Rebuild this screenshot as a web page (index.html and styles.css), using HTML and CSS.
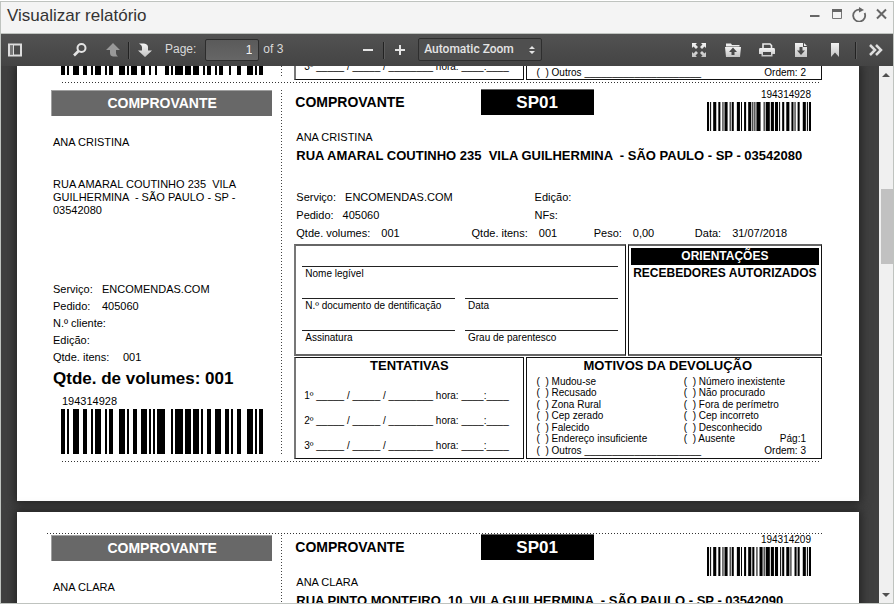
FILE: index.html
```html
<!DOCTYPE html>
<html lang="pt-BR">
<head>
<meta charset="utf-8">
<title>Visualizar relatório</title>
<link rel="stylesheet" href="styles.css">
</head>
<body>
<svg class="defs" aria-hidden="true">
  <defs>
    <linearGradient id="metal" x1="0" y1="0" x2="0" y2="1"><stop offset="0" stop-color="#f4f4f4"/><stop offset="1" stop-color="#c4c4c4"/></linearGradient>
  </defs>
  <!-- Code 128 symbols: bar and space widths as a dash pattern, one unit per module -->
  <symbol id="code-928" viewBox="0 0 101 10" preserveAspectRatio="none"><path d="M0 5H101" stroke="#000" stroke-width="10" stroke-dasharray="2 1 1 2 3 2 2 2 1 1 3 2 1 1 2 3 3 1 1 2 2 2 3 1 1 1 1 1 4 3 1 1 4 1 3 1 3 1 1 2 2 2 3 2 2 1 1 2 2 3 3 1 1 1 2"/></symbol>
  <symbol id="code-209" viewBox="0 0 101 10" preserveAspectRatio="none"><path d="M0 5H101" stroke="#000" stroke-width="10" stroke-dasharray="2 1 1 2 3 2 2 2 1 1 3 2 1 1 2 3 3 1 1 2 2 2 3 1 2 2 1 2 3 1 1 1 4 1 3 1 3 2 1 1 2 2 3 1 1 3 2 1 2 3 3 1 1 1 2"/></symbol>
  <symbol id="code-669" viewBox="0 0 101 10" preserveAspectRatio="none"><path d="M0 5H101" stroke="#000" stroke-width="10" stroke-dasharray="2 1 1 2 3 2 2 2 1 1 3 2 1 1 2 3 3 1 1 1 3 2 2 2 1 2 1 4 2 1 1 1 4 1 3 1 3 2 1 1 2 2 1 1 2 3 1 3 2 3 3 1 1 1 2"/></symbol>
</svg>
<div class="window">
  <header class="titlebar">
    <h1>Visualizar relatório</h1>
    <div class="window-buttons">
      <button type="button" aria-label="Minimizar"><svg width="16" height="16" viewBox="0 0 16 16"><path d="M3 10H12.500" stroke="#666" stroke-width="2"/></svg></button>
      <button type="button" aria-label="Maximizar"><svg width="16" height="16" viewBox="0 0 16 16"><path d="M3.500 3.500H12.500V12.500H3.500Z" fill="none" stroke="#777"/><path d="M3 4.500H13" stroke="#666" stroke-width="3"/></svg></button>
      <button type="button" aria-label="Recarregar"><svg width="16" height="16" viewBox="0 0 16 16"><path d="M9 3.600A6 6 0 1 0 13.600 7" fill="none" stroke="#666" stroke-width="1.800"/><path d="M8 1V6.500L13 4Z" fill="#666"/></svg></button>
      <button type="button" aria-label="Fechar"><svg width="16" height="16" viewBox="0 0 16 16"><path d="M4 3.500L13 12.500M13 3.500L4 12.500" stroke="#666" stroke-width="2"/></svg></button>
    </div>
  </header>

  <div class="toolbar">
    <div class="tools tools-left">
      <button type="button" aria-label="Toggle Sidebar" class="sidebar-toggle"><svg width="16" height="16" viewBox="0 0 16 16"><path d="M2 2.500H14V13.500H2Z" fill="none" stroke="#ddd" stroke-width="2"/><path d="M3 3.500H6V12.500H3Z" fill="#777"/><path d="M6.500 3V13" stroke="#ddd"/></svg></button>
      <button type="button" aria-label="Find" class="find"><svg width="16" height="16" viewBox="0 0 16 16"><circle cx="9.500" cy="6" r="4" fill="none" stroke="#e4e4e4" stroke-width="2"/><path d="M6.500 9L2 13.500" stroke="#e4e4e4" stroke-width="2.600"/></svg></button>
      <button type="button" aria-label="Previous Page"><svg width="16" height="16" viewBox="0 0 16 16"><path d="M8 1L15 8H11V11Q11 13 13 14.500H8Q5 14 5 11V8H1Z" fill="#999"/></svg></button>
      <span class="separator"></span>
      <button type="button" aria-label="Next Page"><svg width="16" height="16" viewBox="0 0 16 16"><path d="M8 15L1 8.500H5V5Q5 3 2 1.500H7Q11 2 11 5V8.500H15Z" fill="url(#metal)"/></svg></button>
      <label for="page-number">Page:</label>
      <input id="page-number" type="text" value="1">
      <span class="page-count">of 3</span>
    </div>
    <div class="tools tools-middle">
      <button type="button" aria-label="Zoom Out"><svg width="16" height="16" viewBox="0 0 16 16"><path d="M3 8H13" stroke="#e4e4e4" stroke-width="2"/></svg></button>
      <span class="separator"></span>
      <button type="button" aria-label="Zoom In"><svg width="16" height="16" viewBox="0 0 16 16"><path d="M3 8H13M8 3V13" stroke="#e4e4e4" stroke-width="2"/></svg></button>
      <div class="zoom">
        <select aria-label="Zoom"><option>Automatic Zoom</option></select>
        <svg width="6" height="10" viewBox="0 0 6 10"><path d="M0 4L3 1L6 4ZM0 6L3 9L6 6Z" fill="#e4e4e4"/></svg>
      </div>
    </div>
    <div class="tools tools-right">
      <button type="button" aria-label="Presentation Mode"><svg width="16" height="16" viewBox="0 0 16 16"><path d="M1 1H6L4.500 2.500L7 5L5 7L2.500 4.500L1 6ZM15 1V6L13.500 4.500L11 7L9 5L11.500 2.500L10 1ZM1 15V10L2.500 11.500L5 9L7 11L4.500 13.500L6 15ZM15 15H10L11.500 13.500L9 11L11 9L13.500 11.500L15 10Z" fill="url(#metal)"/></svg></button>
      <button type="button" aria-label="Open File"><svg width="16" height="16" viewBox="0 0 16 16"><path d="M1 1.500H6L7 3H14.500V4.500H1Z" fill="#eee"/><path fill-rule="evenodd" d="M0 5H16L15 15H1ZM8 5.500L4 10H6.500V13H9.500V10H12Z" fill="url(#metal)"/></svg></button>
      <button type="button" aria-label="Print"><svg width="16" height="16" viewBox="0 0 16 16"><path d="M4 6.500V2H11L12.500 3.500V6.500" fill="none" stroke="#ececec" stroke-width="1.600"/><path fill-rule="evenodd" d="M1 6H15Q16 6 16 8V12H13.500V14.500H2.500V12H0V8Q0 6 1 6ZM4 10V13H12V10Z" fill="url(#metal)"/></svg></button>
      <button type="button" aria-label="Download"><svg width="16" height="16" viewBox="0 0 16 16"><path fill-rule="evenodd" d="M2 1H10V5H14V15H2ZM6.500 5V8.500H4L8 13L12 8.500H9.500V5Z" fill="url(#metal)"/><path d="M11 1L14 4H11Z" fill="#eee"/></svg></button>
      <button type="button" aria-label="Bookmark"><svg width="16" height="16" viewBox="0 0 16 16"><path d="M4 1H12V15L8 10.500L4 15Z" fill="url(#metal)"/></svg></button>
      <span class="separator"></span>
      <button type="button" aria-label="Tools" class="more"><svg width="16" height="16" viewBox="0 0 16 16"><path d="M2 3L7 8L2 13M8 3L13 8L8 13" fill="none" stroke="#dedede" stroke-width="2.500"/></svg></button>
    </div>
  </div>

  <div class="viewer">
    <main class="pages">
      <section class="page page-first">
        <div class="tail">
          <div class="receipt">
            <div class="stub"><svg class="barcode-large"><use href="#code-669"/></svg></div>
            <div class="main">
              <div class="boxes lower">
                <div class="box"><p class="attempt">3º _____ / _____ / ________ hora: ____:____</p></div>
                <div class="box">
                  <div class="reasons"><span>( &nbsp;) Outros _____________________</span><span class="end">Ordem: 2</span></div>
                </div>
              </div>
            </div>
          </div>
        </div>
        <div class="cut"></div>
        <article class="receipt">
          <div class="stub">
            <h2 class="stub-title">COMPROVANTE</h2>
            <p class="stub-name">ANA CRISTINA</p>
            <p class="stub-address">RUA AMARAL COUTINHO 235 &nbsp;VILA GUILHERMINA &nbsp;- SÃO PAULO - SP - 03542080</p>
            <dl class="stub-info">
              <div><dt>Serviço:</dt><dd>ENCOMENDAS.COM</dd></div>
              <div><dt>Pedido:</dt><dd>405060</dd></div>
              <div><dt>N.º cliente:</dt><dd></dd></div>
              <div><dt>Edição:</dt><dd></dd></div>
              <div class="wide"><dt>Qtde. itens:</dt><dd>001</dd></div>
            </dl>
            <p class="total">Qtde. de volumes: 001</p>
            <p class="stub-number">194314928</p>
            <svg class="barcode-large" role="img" aria-label="194314928"><use href="#code-928"/></svg>
          </div>
          <div class="main">
            <div class="head">
              <h2>COMPROVANTE</h2>
              <strong class="route">SP01</strong>
              <div class="code"><span>194314928</span><svg class="barcode-small" role="img" aria-label="194314928"><use href="#code-928"/></svg></div>
            </div>
            <p class="name">ANA CRISTINA</p>
            <p class="address">RUA AMARAL COUTINHO 235 &nbsp;VILA GUILHERMINA &nbsp;- SÃO PAULO - SP - 03542080</p>
            <dl class="info">
              <div class="two"><div class="pair"><dt>Serviço:</dt><dd>ENCOMENDAS.COM</dd></div><div class="pair"><dt>Edição:</dt><dd></dd></div></div>
              <div class="two"><div class="pair"><dt>Pedido:</dt><dd>405060</dd></div><div class="pair"><dt>NFs:</dt><dd></dd></div></div>
              <div class="four"><div class="pair"><dt>Qtde. volumes:</dt><dd>001</dd></div><div class="pair"><dt>Qtde. itens:</dt><dd>001</dd></div><div class="pair"><dt>Peso:</dt><dd>0,00</dd></div><div class="pair"><dt>Data:</dt><dd>31/07/2018</dd></div></div>
            </dl>
            <div class="boxes upper">
              <div class="box signature">
                <span class="full">Nome legível</span>
                <span>N.º documento de dentificação</span><span>Data</span>
                <span>Assinatura</span><span>Grau de parentesco</span>
              </div>
              <div class="box guidance"><h3>ORIENTAÇÕES</h3><p>RECEBEDORES AUTORIZADOS</p></div>
            </div>
            <div class="boxes lower">
              <div class="box"><h3>TENTATIVAS</h3>
                <p class="attempt">1º _____ / _____ / ________ hora: ____:____</p>
                <p class="attempt">2º _____ / _____ / ________ hora: ____:____</p>
                <p class="attempt">3º _____ / _____ / ________ hora: ____:____</p>
              </div>
              <div class="box returns"><h3>MOTIVOS DA DEVOLUÇÃO</h3>
                <div class="reasons">
                  <span>( &nbsp;) Mudou-se</span><span>( &nbsp;) Número inexistente</span>
                  <span>( &nbsp;) Recusado</span><span>( &nbsp;) Não procurado</span>
                  <span>( &nbsp;) Zona Rural</span><span>( &nbsp;) Fora de perímetro</span>
                  <span>( &nbsp;) Cep zerado</span><span>( &nbsp;) Cep incorreto</span>
                  <span>( &nbsp;) Falecido</span><span>( &nbsp;) Desconhecido</span>
                  <span>( &nbsp;) Endereço insuficiente</span><span class="split"><span>( &nbsp;) Ausente</span><span>Pág:1</span></span>
                  <span>( &nbsp;) Outros _____________________</span><span class="end">Ordem: 3</span>
                </div>
              </div>
            </div>
          </div>
        </article>
        <div class="cut"></div>
      </section>

      <section class="page page-next">
        <div class="cut cut-top"></div>
        <article class="receipt">
          <div class="stub">
            <h2 class="stub-title">COMPROVANTE</h2>
            <p class="stub-name">ANA CLARA</p>
          </div>
          <div class="main">
            <div class="head">
              <h2>COMPROVANTE</h2>
              <strong class="route">SP01</strong>
              <div class="code"><span>194314209</span><svg class="barcode-small" role="img" aria-label="194314209"><use href="#code-209"/></svg></div>
            </div>
            <p class="name">ANA CLARA</p>
            <p class="address">RUA PINTO MONTEIRO, 10 &nbsp;VILA GUILHERMINA &nbsp;- SÃO PAULO - SP - 03542090</p>
          </div>
        </article>
      </section>
    </main>
    <div class="scrollbar" aria-hidden="true">
      <span class="arrow up"></span><span class="thumb"></span><span class="arrow down"></span>
    </div>
  </div>
</div>
</body>
</html>
```
FILE: styles.css
```css
* { box-sizing: border-box; }

body {
  margin: 0;
  background: #fff;
  color: #000;
  font-family: "Liberation Sans", Arial, sans-serif;
  font-size: 11px;
}

h1, h2, h3, p, dl, dd { margin: 0; }
button { padding: 0; border: 0; background: none; }
svg { display: block; }
.defs { position: absolute; width: 0; height: 0; }

.window {
  display: flex;
  flex-direction: column;
  height: calc(100vh - 2px);
  margin: 1px 1px 1px 0;
  border: 1px solid #bfc3bf;
  overflow: hidden;
}

.titlebar {
  display: flex;
  justify-content: space-between;
  height: 32px;
  flex: none;
  padding: 0 4px 0 6px;
  border-bottom: 1px solid #bfc3bf;
  background: #f4f4f4;
}
.titlebar h1 { font-size: 17px; font-weight: 400; line-height: 28px; color: #333; }
.window-buttons { display: flex; gap: 6px; padding-top: 4px; height: 20px; }

.toolbar {
  display: flex;
  justify-content: space-between;
  flex: none;
  height: 32px;
  padding: 0 9px 0 6px;
  background: linear-gradient(#525252, #444);
  color: #d9d9d9;
  font-size: 12px;
}
.tools { display: flex; align-items: center; }
.tools-left label { margin: 0 9px 2px 12px; }
.tools-left .find { margin: 0 17px 0 49px; }
.tools-left .separator { margin: 0 7px; }
.page-count { margin: 0 0 2px 4px; }
.separator { width: 2px; height: 17px; border-left: 1px solid #222; border-right: 1px solid #5c5c5c; }
#page-number {
  width: 54px;
  height: 22px;
  margin-bottom: 1px;
  padding: 0 6px;
  border: 1px solid #2c2c2c;
  border-radius: 2px;
  background: linear-gradient(#5a5a5a, #666);
  color: #f2f2f2;
  font: 12px "Liberation Sans", Arial, sans-serif;
  text-align: right;
}
.tools-middle { margin-right: 72px; }
.tools-middle .separator { margin: 0 7px; }
.zoom { position: relative; margin: 0 0 2px 10px; }
.zoom select {
  width: 124px;
  height: 23px;
  padding: 0 5px;
  border: 1px solid #2e2e2e;
  border-radius: 2px;
  appearance: none;
  background: #4f4f4f;
  color: #e4e4e4;
  font: 500 12px Roboto, "Liberation Sans", sans-serif;
}
.zoom svg { position: absolute; right: 7px; top: 7px; }
.tools-right { gap: 18px; }
.tools-right .separator { margin-right: -7px; margin-left: -6px; }

.viewer { display: flex; flex: 1; min-height: 0; background: #404040; }
.pages {
  display: flex;
  flex: 1;
  flex-direction: column;
  gap: 11px;
  min-width: 0;
  padding: 0 20px 0 16px;
  overflow: hidden;
}
.page { flex: none; padding-left: 34px; padding-right: 37px; background: #fff; box-shadow: 0 0 9px 2px #222; }
.page-first { padding-bottom: 39px; }
.page-next { padding-top: 21px; }

.cut {
  height: 1px;
  margin: 0 2px 0 11px;
  background: repeating-linear-gradient(90deg, #333 0 1px, #fff 1px 3px);
}
.cut-top { margin: 0 0 0 -4px; }

.receipt {
  display: grid;
  grid-template-columns: minmax(0, 3fr) minmax(0, 7fr);
  margin-top: 6px;
}
.page-next .receipt { margin-top: 0; }

.stub {
  position: relative;
  display: flex;
  flex-direction: column;
  margin: 1px 0 6px;
  padding-right: 10px;
}
.stub::after {
  position: absolute;
  top: 0;
  right: 0;
  bottom: 0;
  width: 1px;
  background: repeating-linear-gradient(#444 0 1px, #fff 1px 3px);
  content: "";
}
.stub p, .stub-info { margin-left: 2px; }
.stub-title {
  border-top: 1px solid #a0a0a0;
  border-left: 1px solid #a0a0a0;
  background: #686868;
  color: #fff;
  font-size: 14px;
  line-height: 25px;
  text-align: center;
}
.stub .stub-name { margin-top: 19px; line-height: 14px; }
.stub .stub-address { margin-top: 29px; line-height: 13px; }
.stub-info { margin-top: 64px; line-height: 17px; }
.stub-info div { display: grid; grid-template-columns: 49px 1fr; height: 17px; white-space: nowrap; }
.stub-info .wide { grid-template-columns: 70px 1fr; }
.stub .total { margin-top: 2px; font-size: 17px; font-weight: 700; line-height: 21px; }
.stub .stub-number { margin: 5px 0 1px 11px; line-height: 14px; }
.barcode-large { width: 202px; height: 45px; margin-left: 10px; margin-bottom: 1px; }

.main { margin-bottom: 2px; padding-left: 12px; }
.head { display: grid; grid-template-columns: 186fr 113fr 228fr; height: 41px; }
.head h2 { padding-left: 1px; font-size: 14px; line-height: 26px; }
.route {
  height: 26px;
  border-top: 1px solid #666;
  background: #000;
  color: #fff;
  font-size: 17px;
  line-height: 25px;
  text-align: center;
}
.code { justify-self: end; margin-right: 11px; font-size: 10px; line-height: 12px; text-align: right; }
.barcode-small { width: 104px; height: 29px; margin-top: 1px; }
.name { padding-left: 2px; line-height: 14px; }
.address { padding-left: 2px; font-size: 13px; font-weight: 700; line-height: 23px; white-space: nowrap; }

.info { margin: 21px 0 2px; padding-left: 2px; line-height: 18px; }
.two { display: grid; grid-template-columns: 238fr 287fr; }
.four { display: grid; grid-template-columns: 175fr 122fr 101fr 127fr; }
.pair { display: flex; gap: 9px; white-space: nowrap; }
.four .pair { gap: 11px; }

.boxes { display: grid; gap: 2px; }
.upper { grid-template-columns: 331fr 194fr; margin-bottom: 1px; }
.lower { grid-template-columns: 229fr 296fr; }
.box { border: 1px solid #111; }
.box:first-child { border-left: 2px solid #777; }
.upper .box { min-height: 112px; border-top: 2px solid #666; border-bottom: 2px solid #666; }
.lower .box { min-height: 102px; }
.box h3 { font-size: 13px; line-height: 15px; text-align: center; }

.signature {
  display: grid;
  grid-template-columns: 1fr 1fr;
  grid-template-rows: 32px 32px auto;
  column-gap: 10px;
  padding: 20px 7px 0 6px;
  font-size: 10px;
  line-height: 14px;
}
.signature span { padding-left: 3px; border-top: 1px solid #222; }
.signature .full { grid-column: 1 / -1; }

.guidance { padding: 2px; }
.guidance h3, .guidance p { font-size: 12px; font-weight: 700; text-align: center; white-space: nowrap; }
.guidance h3 { background: #000; color: #fff; line-height: 17px; }
.guidance p { line-height: 16px; }

.attempt { padding-left: 8px; font-size: 10px; line-height: 25px; white-space: nowrap; }
.box h3 + .attempt { margin-top: 10px; }

.returns h3 { padding-right: 12px; }
.reasons {
  display: grid;
  grid-template-columns: minmax(0, 147fr) minmax(0, 122fr);
  grid-template-rows: repeat(7, 1fr);
  height: 80px;
  margin-top: 3px;
  padding: 0 15px 0 10px;
  font-size: 10px;
  line-height: 11px;
  white-space: nowrap;
}
.split { display: flex; justify-content: space-between; }
.end { text-align: right; }

.tail { display: flex; align-items: flex-end; height: 16px; overflow: hidden; }
.tail .receipt { flex: 1; margin-top: 0; }
.tail .stub { justify-content: flex-end; }
.tail .main { align-self: end; }
.tail .box { display: flex; flex-direction: column; justify-content: flex-end; min-height: 0; border-top: 0; }
.tail .reasons { height: 11px; margin-bottom: 1px; grid-template-rows: auto; }

.scrollbar {
  display: flex;
  flex-direction: column;
  align-items: center;
  width: 14px;
  padding: 7px 0 6px;
  background: #f0f0f0;
}
.arrow { border: 4px solid transparent; }
.up { border-top: 0; border-bottom-color: #505050; }
.down { margin-top: auto; border-bottom: 0; border-top-color: #505050; }
.thumb { align-self: flex-end; width: 12px; height: 75px; margin-top: 112px; background: #c1c1c1; }
```
